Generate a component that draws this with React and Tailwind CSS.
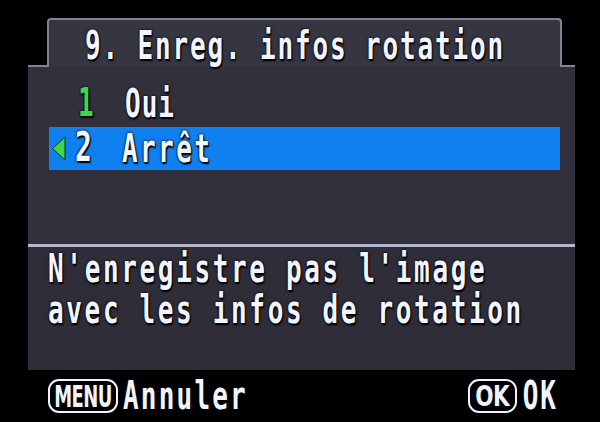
import React from "react";

const mono = "font-['DejaVu_Sans_Mono',monospace] font-bold";
const glow = "[text-shadow:0_0_2px_#05050f,0_0_1px_#000,1px_1px_1px_#000]";

function Tall({ children, className = "" }) {
  return (
    <span className={`inline-block origin-center scale-y-[1.48] whitespace-pre text-[26px] leading-none ${mono} ${glow} ${className}`}>
      {children}
    </span>
  );
}

// apostrophe and the following space share a single cell
function Apos() {
  return <span className="tracking-[-6.5px]">' </span>;
}

function Pill({ children, className = "", textClass = "" }) {
  return (
    <span className={`flex h-[34px] shrink-0 items-center justify-center rounded-[11px] border-2 border-[#eef2ff] bg-black ${className}`}>
      <span className={`inline-block font-['DejaVu_Sans_Condensed','DejaVu_Sans',sans-serif] font-bold leading-none text-[#eef2ff] [font-stretch:condensed] ${textClass}`}>
        {children}
      </span>
    </span>
  );
}

export default function App() {
  return (
    <div className="flex h-[422px] w-[600px] flex-col overflow-hidden bg-black pt-[18px] text-[#f2f5ff]">
      {/* title tab */}
      <div className="relative z-10 -mb-[2px] ml-[47px] flex h-[49px] w-[515px] items-center rounded-t-[4px] border-2 border-b-0 border-[#7f8394] bg-[#363643] pl-[36px] pt-[4px]">
        <Tall className="tracking-[1.85px]">9. Enreg. infos rotation</Tall>
      </div>

      {/* main panel */}
      <div className="ml-[28px] flex h-[305px] w-[547px] flex-col border-t-2 border-[#7f8394] bg-[#302f3b]">
        <div className="flex h-[177px] flex-col bg-[#31303c] pt-[17px]">
          {/* option 1 */}
          <div className="flex h-[40px] items-center pl-[50px]">
            <span className="w-[47px] shrink-0">
              <Tall className="text-[#3fd64a]">1</Tall>
            </span>
            <Tall className="tracking-[1px]">Oui</Tall>
          </div>
          {/* option 2, selected */}
          <div className="ml-[21px] mt-[3px] flex h-[43px] w-[511px] items-center bg-[#1080f0]">
            <svg width="15" height="25" viewBox="0 0 15 25" className="ml-[2px] shrink-0">
              <path d="M14 1 L1.5 12.5 L14 24 Z" fill="#3fd64a" stroke="#0a3014" strokeWidth="1" />
            </svg>
            <span className="ml-[9px] w-[47px] shrink-0">
              <Tall className="font-['DejaVu_Sans',sans-serif] text-[28px]">2</Tall>
            </span>
            <Tall className="tracking-[2.4px]">Arrêt</Tall>
          </div>
        </div>

        {/* divider */}
        <div className="h-[3px] bg-[#b3b8cc]" />

        {/* description */}
        <div className="flex flex-1 flex-col bg-[#2e2d38] pl-[20px] pt-[1px]">
          <div className="flex h-[41px] items-center">
            <Tall className="tracking-[2.65px]">
              N<Apos />enregistre pas l<Apos />image
            </Tall>
          </div>
          <div className="flex h-[41px] items-center">
            <Tall className="tracking-[2.65px]">avec les infos de rotation</Tall>
          </div>
        </div>
      </div>

      {/* button hints */}
      <div className="flex h-[52px] items-center pl-[48px] pr-[42px]">
        <Pill className="w-[70px]" textClass="scale-y-[1.55] text-[20px] tracking-[-0.6px]">
          MENU
        </Pill>
        <Tall className="ml-[5px] tracking-[2.2px]">Annuler</Tall>
        <div className="flex-1" />
        <Pill className="w-[49px]" textClass="scale-y-[1.2] text-[24px] tracking-[-0.5px]">
          OK
        </Pill>
        <Tall className="ml-[6px] tracking-[2px]">OK</Tall>
      </div>
    </div>
  );
}
